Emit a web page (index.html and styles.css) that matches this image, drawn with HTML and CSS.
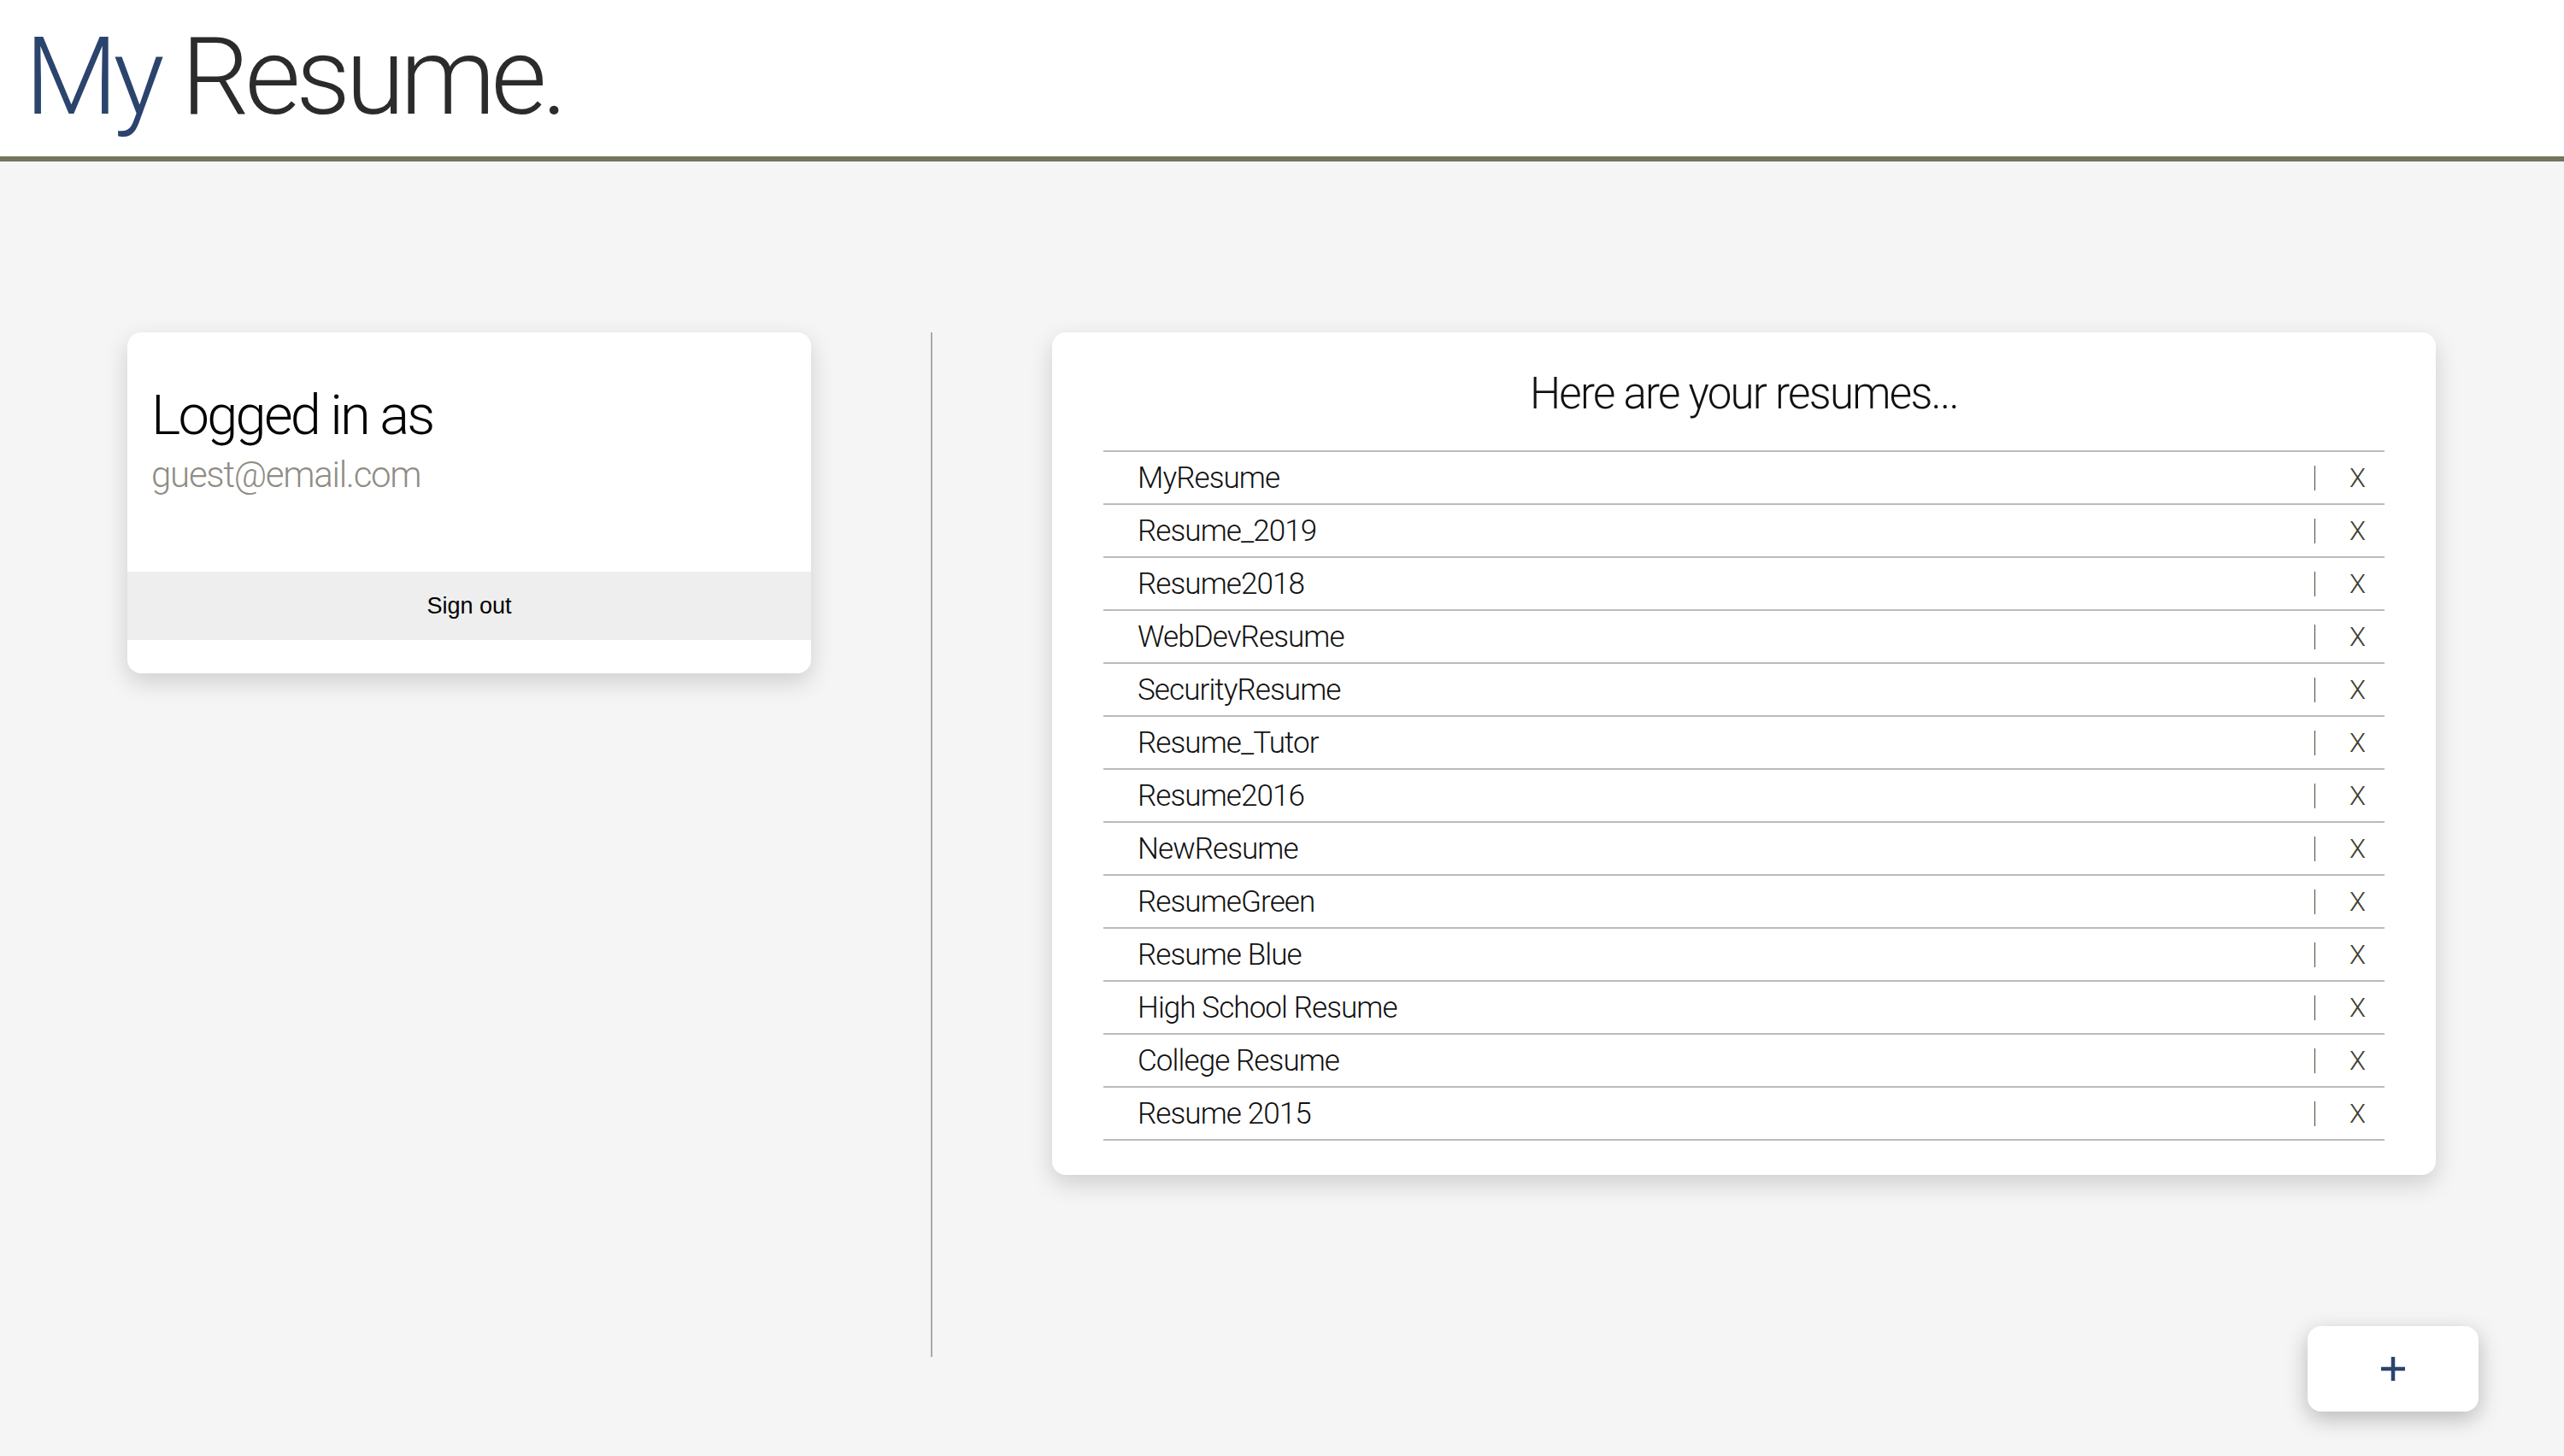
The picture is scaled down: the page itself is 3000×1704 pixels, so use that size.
FILE: index.html
```html
<!DOCTYPE html>
<html lang="en">
<head>
<meta charset="utf-8">
<title>My Resume.</title>
<link rel="stylesheet" href="styles.css">
</head>
<body>
<header class="topbar">
  <h1 class="brand"><span class="brand-my">My</span><span class="brand-rest">Resume.</span></h1>
</header>
<main class="main">
  <section class="user-card">
    <div class="user-info">
      <h2 class="user-label">Logged in as</h2>
      <p class="user-email">guest@email.com</p>
    </div>
    <button class="signout">Sign out</button>
  </section>
  <div class="divider"></div>
  <section class="resume-card">
    <h2 class="resume-title">Here are your resumes...</h2>
    <ul class="resume-list">
      <li class="resume-row"><span class="resume-name">MyResume</span><span class="sep"></span><span class="del">X</span></li>
      <li class="resume-row"><span class="resume-name">Resume_2019</span><span class="sep"></span><span class="del">X</span></li>
      <li class="resume-row"><span class="resume-name">Resume2018</span><span class="sep"></span><span class="del">X</span></li>
      <li class="resume-row"><span class="resume-name">WebDevResume</span><span class="sep"></span><span class="del">X</span></li>
      <li class="resume-row"><span class="resume-name">SecurityResume</span><span class="sep"></span><span class="del">X</span></li>
      <li class="resume-row"><span class="resume-name">Resume_Tutor</span><span class="sep"></span><span class="del">X</span></li>
      <li class="resume-row"><span class="resume-name">Resume2016</span><span class="sep"></span><span class="del">X</span></li>
      <li class="resume-row"><span class="resume-name">NewResume</span><span class="sep"></span><span class="del">X</span></li>
      <li class="resume-row"><span class="resume-name">ResumeGreen</span><span class="sep"></span><span class="del">X</span></li>
      <li class="resume-row"><span class="resume-name">Resume Blue</span><span class="sep"></span><span class="del">X</span></li>
      <li class="resume-row"><span class="resume-name">High School Resume</span><span class="sep"></span><span class="del">X</span></li>
      <li class="resume-row"><span class="resume-name">College Resume</span><span class="sep"></span><span class="del">X</span></li>
      <li class="resume-row"><span class="resume-name">Resume 2015</span><span class="sep"></span><span class="del">X</span></li>
    </ul>
  </section>
</main>
<button class="add-btn" aria-label="Add resume">
  <svg width="30" height="30" viewBox="0 0 30 30"><path d="M15 1v28M1 15h28" stroke="#2b446e" stroke-width="4.5" fill="none"/></svg>
</button>
</body>
</html>
```
FILE: styles.css
```css
* { box-sizing: border-box; }
html, body { margin: 0; padding: 0; }
body {
  background: #f5f5f5;
  font-family: Roboto, "Liberation Sans", sans-serif;
  font-weight: 300;
  width: 3000px;
  height: 1704px;
  overflow: hidden;
}
.topbar {
  background: #ffffff;
  height: 189px;
  border-bottom: 6px solid #74745f;
  padding: 27px 0 0 29px;
}
.brand {
  margin: 0;
  font-weight: 300;
  font-size: 126px;
  line-height: 1;
  letter-spacing: -5.5px;
  white-space: nowrap;
}
.brand-my { color: #2b446e; margin-right: 25px; }
.brand-rest { color: #2b2b2b; }

.main {
  display: flex;
  align-items: flex-start;
  gap: 140px;
  padding: 200px 150px 0 149px;
}
.user-card {
  flex: 0 0 800px;
  background: #fff;
  border-radius: 16px;
  box-shadow: 0 10px 28px rgba(0,0,0,0.16);
  overflow: hidden;
  padding-bottom: 39px;
}
.user-info {
  padding: 59px 28px 0;
  height: 280px;
}
.user-label {
  margin: 0;
  font-weight: 300;
  font-size: 65px;
  line-height: 76px;
  color: #000;
  letter-spacing: -2.75px;
  white-space: nowrap;
}
.user-email {
  margin: 7px 0 0;
  font-size: 42px;
  line-height: 49px;
  letter-spacing: -1.25px;
  color: #8f8d84;
}
.signout {
  display: block;
  width: 100%;
  height: 80px;
  border: 0;
  background: #eeeeee;
  font-family: "Liberation Sans", Arial, sans-serif;
  font-weight: 400;
  font-size: 27px;
  color: #000;
  padding: 0;
}
.divider {
  flex: 0 0 2px;
  height: 1199px;
  background: #aaaaaa;
}
.resume-card {
  flex: 1 1 auto;
  background: #fff;
  border-radius: 16px;
  box-shadow: 0 10px 28px rgba(0,0,0,0.16);
  padding: 42px 60px 40px 60px;
}
.resume-title {
  margin: 0 0 36px;
  text-align: center;
  font-weight: 300;
  font-size: 51px;
  line-height: 60px;
  letter-spacing: -1.7px;
  color: #111;
}
.resume-list {
  list-style: none;
  margin: 0;
  padding: 0;
  border-top: 2px solid #bbbbbb;
}
.resume-row {
  display: flex;
  align-items: center;
  height: 62px;
  border-bottom: 2px solid #bbbbbb;
  font-size: 35px;
  line-height: 41px;
  letter-spacing: -0.9px;
  color: #111;
}
.resume-name {
  flex: 1 1 auto;
  padding-left: 40px;
}
.sep {
  flex: 0 0 1px;
  height: 29px;
  background: #4a4a3a;
}
.del {
  flex: 0 0 81px;
  padding-left: 40px;
  font-size: 31px;
  letter-spacing: 0;
  color: #3f3f30;
}
.add-btn {
  position: fixed;
  right: 100px;
  bottom: 52px;
  width: 200px;
  height: 100px;
  border: 0;
  border-radius: 16px;
  background: #fff;
  box-shadow: 0 8px 26px rgba(0,0,0,0.25);
  display: flex;
  align-items: center;
  justify-content: center;
  padding: 0;
}
```
